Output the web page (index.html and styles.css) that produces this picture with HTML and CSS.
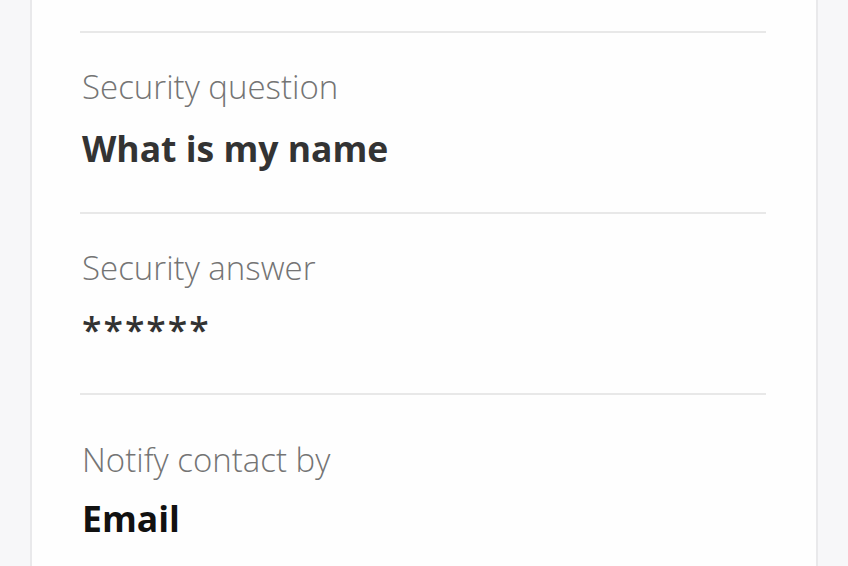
FILE: index.html
```html
<!DOCTYPE html>
<html lang="en">
<head>
<meta charset="utf-8">
<title>Security settings</title>
<link rel="stylesheet" href="styles.css">
</head>
<body>
<div class="page">
  <div class="card">
    <div class="top-spacer"></div>
    <div class="row">
      <div class="label">Security question</div>
      <div class="value">What is my name</div>
    </div>
    <div class="row">
      <div class="label">Security answer</div>
      <div class="value mask">******</div>
    </div>
    <div class="row last">
      <div class="label">Notify contact by</div>
      <div class="value dark">Email</div>
    </div>
  </div>
</div>
</body>
</html>
```

FILE: styles.css
```css
* {
  box-sizing: border-box;
}

html, body {
  margin: 0;
  padding: 0;
  height: 100%;
  background: #f7f7f9;
  font-family: "Open Sans", "Noto Sans", sans-serif;
}

.page {
  display: flex;
  height: 566px;
  overflow: hidden;
  padding-left: 30px;
}

.card {
  flex: none;
  width: 788px;
  background: #fefefe;
  border-left: 2px solid #e9e9eb;
  border-right: 2px solid #e9e9eb;
  padding: 0 50px 0 48px;
  display: flex;
  flex-direction: column;
}

.top-spacer {
  height: 33px;
  border-bottom: 2px solid #e8e8e8;
  flex: none;
}

.row {
  flex: none;
  padding-top: 34px;
  padding-bottom: 44px;
  border-bottom: 2px solid #e8e8e8;
  display: flex;
  flex-direction: column;
  gap: 21px;
}

.row.last {
  border-bottom: none;
  padding-top: 45px;
  gap: 18px;
}

.label {
  font-size: 33px;
  font-weight: 300;
  line-height: 40px;
  color: #747474;
  padding-left: 2px;
}

.value {
  font-size: 35.5px;
  font-weight: 700;
  line-height: 40px;
  color: #333333;
  padding-left: 2px;
}

.value.mask {
  font-weight: 600;
  letter-spacing: 2px;
}

.value.dark {
  color: #111111;
}
```
